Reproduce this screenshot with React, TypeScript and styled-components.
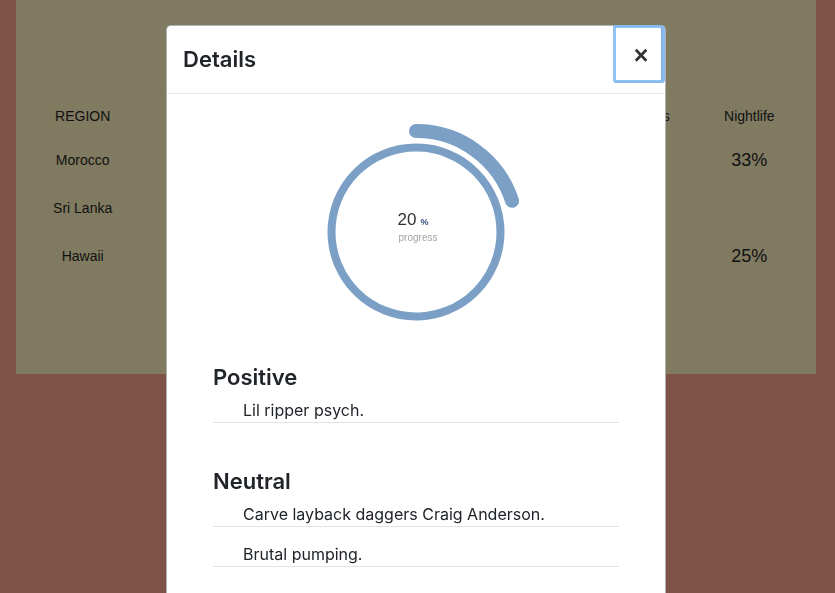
import React from "react";
import styled, { createGlobalStyle } from "styled-components";

const Global = createGlobalStyle`
  html, body { margin: 0; padding: 0; }
  body {
    background: #7f5248;
    min-height: 100vh;
    overflow: hidden;
    font-family: "Liberation Sans", Arial, sans-serif;
  }
`;

const Page = styled.div`
  padding: 0 19px 0 16px;
`;

const Panel = styled.div`
  background: #7f7a60;
  height: 374px;
  padding-top: 96px;
  box-sizing: border-box;
`;

const Table = styled.div`
  display: grid;
  grid-template-columns: repeat(6, 1fr);
  grid-auto-rows: 48px;
  grid-template-rows: 40px;
  color: #111;
  font-size: 14px;
`;

const Cell = styled.div<{ $big?: boolean }>`
  display: flex;
  align-items: center;
  justify-content: center;
  font-size: ${(p) => (p.$big ? "18px" : "14px")};
  white-space: nowrap;
`;

const Modal = styled.div`
  position: fixed;
  top: 25px;
  left: 166px;
  width: 500px;
  height: 640px;
  box-sizing: border-box;
  background: #fff;
  border: 1px solid rgba(0, 0, 0, 0.3);
  border-radius: 5px;
  font-family: Inter, "Noto Sans", sans-serif;
  color: #212529;
  display: flex;
  flex-direction: column;
`;

const Header = styled.div`
  display: flex;
  align-items: flex-start;
  padding: 16px;
  border-bottom: 1px solid #e6e8eb;
`;

const Title = styled.h4`
  margin: 0;
  font-size: 22px;
  font-weight: 600;
  line-height: 35px;
`;

const Close = styled.button`
  margin: -17px -16px -6px auto;
  width: 52px;
  height: 58px;
  border: none;
  background: transparent;
  border-radius: 0 5px 4px 4px;
  box-shadow: inset 0 0 0 3px rgba(135, 188, 245, 0.9), inset -2px 0 0 2px rgba(96, 145, 205, 0.8);
  font-family: "Liberation Sans", Arial, sans-serif;
  font-weight: 700;
  font-size: 25px;
  line-height: 1;
  color: #333;
  padding: 2px 0 0 4px;
  cursor: pointer;
`;

const Body = styled.div`
  padding: 28px 46px 0;
`;

const Chart = styled.div`
  position: relative;
  width: 220px;
  height: 220px;
  margin: 0 auto 23px;
`;

const ChartLabel = styled.div`
  position: absolute;
  left: 0;
  right: 0;
  top: 90px;
  display: flex;
  flex-direction: column;
  align-items: center;
  font-family: "Liberation Sans", Arial, sans-serif;
`;

const Value = styled.div`
  font-size: 17px;
  line-height: 16px;
  color: #333;
  margin-left: -6px;
`;

const Unit = styled.span`
  font-size: 9px;
  font-weight: 700;
  color: #2d4f7c;
  margin-left: 4px;
`;

const Caption = styled.div`
  font-size: 10px;
  line-height: 10px;
  color: #a3a3a3;
  margin-top: 3px;
  margin-left: 4px;
`;

const Section = styled.section`
  margin-bottom: 46px;
`;

const SectionTitle = styled.h3`
  margin: 0 0 -6px;
  font-size: 22px;
  font-weight: 600;
  line-height: 24px;
`;

const List = styled.ul`
  list-style: none;
  margin: 0;
  padding: 0;
`;

const Item = styled.li`
  padding: 15px 0 0 30px;
  font-size: 16px;
  line-height: 24px;
  border-bottom: 1px solid #dfe2e6;
`;

const rows = [
  ["REGION", "Surf", "Weather", "Food", "Accommodations", "Nightlife"],
  ["Morocco", "", "", "", "", "33%"],
  ["Sri Lanka", "", "", "", "", ""],
  ["Hawaii", "", "", "", "", "25%"],
];

function ProgressRing({ pct }: { pct: number }) {
  const cx = 110;
  const cy = 110;
  const R = 101;
  const a = (pct / 100) * Math.PI * 2;
  const ex = cx + R * Math.sin(a);
  const ey = cy - R * Math.cos(a);
  return (
    <svg width="220" height="220" viewBox="0 0 220 220">
      <circle cx={cx} cy={cy} r="84.5" fill="none" stroke="#7b9fc5" strokeWidth="8" />
      <path
        d={`M ${cx} ${cy - R} A ${R} ${R} 0 0 1 ${ex} ${ey}`}
        fill="none"
        stroke="#7b9fc5"
        strokeWidth="14"
        strokeLinecap="round"
      />
    </svg>
  );
}

export default function App() {
  return (
    <>
      <Global />
      <Page>
        <Panel>
          <Table>
            {rows.map((r, i) =>
              r.map((c, j) => (
                <Cell key={`${i}-${j}`} $big={i > 0 && j === 5}>
                  {c}
                </Cell>
              ))
            )}
          </Table>
        </Panel>
      </Page>
      <Modal>
        <Header>
          <Title>Details</Title>
          <Close aria-label="Close">×</Close>
        </Header>
        <Body>
          <Chart>
            <ProgressRing pct={20} />
            <ChartLabel>
              <Value>
                20<Unit>%</Unit>
              </Value>
              <Caption>progress</Caption>
            </ChartLabel>
          </Chart>
          <Section>
            <SectionTitle>Positive</SectionTitle>
            <List>
              <Item>Lil ripper psych.</Item>
            </List>
          </Section>
          <Section>
            <SectionTitle>Neutral</SectionTitle>
            <List>
              <Item>Carve layback daggers Craig Anderson.</Item>
              <Item>Brutal pumping.</Item>
            </List>
          </Section>
        </Body>
      </Modal>
    </>
  );
}
